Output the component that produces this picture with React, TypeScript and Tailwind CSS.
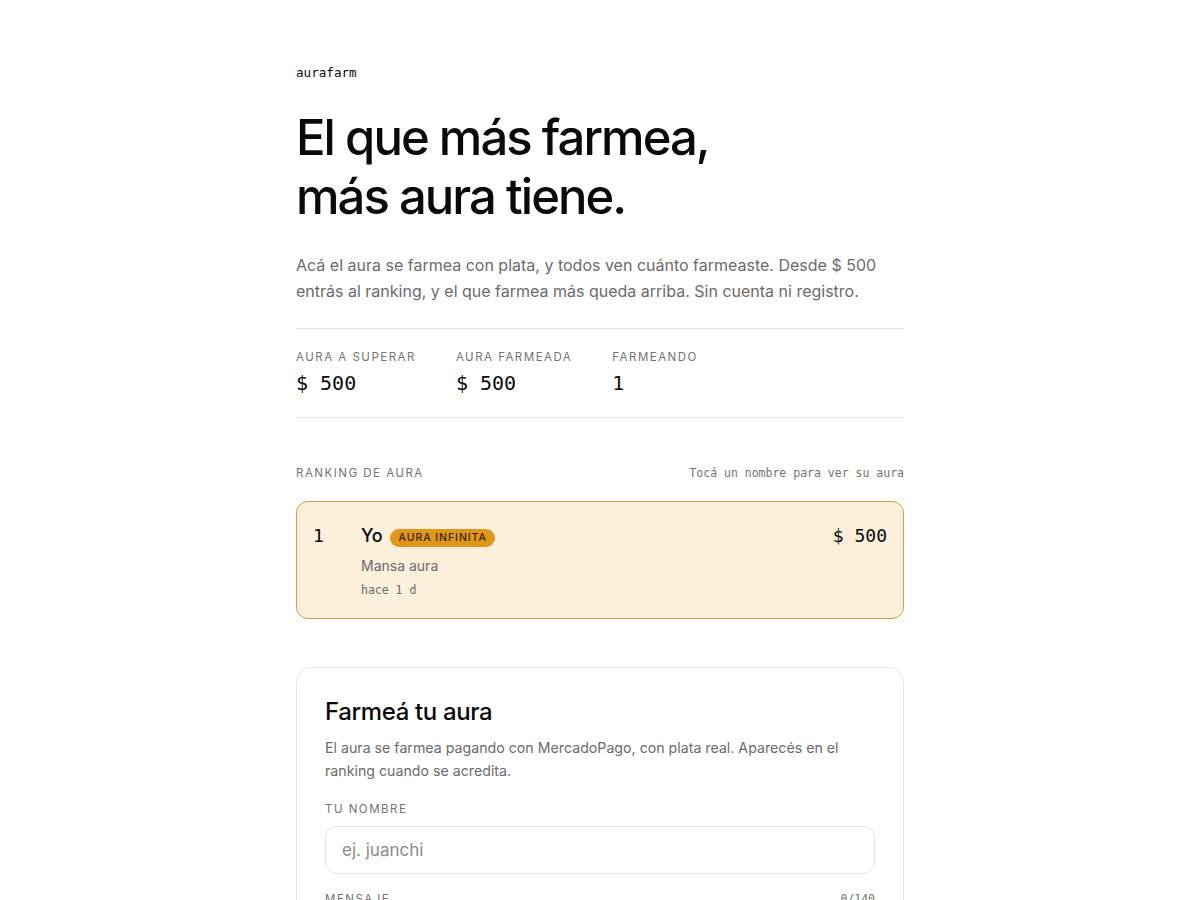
const mono = "font-['DejaVu_Sans_Mono',monospace]"

export default function App() {
  return (
    <div className="min-h-screen bg-white text-[#0a0a0a] font-['Inter',sans-serif]">
      <main className="max-w-[608px] mx-auto pt-[64px] pb-16">
        <div className={`${mono} text-[12.6px] leading-[18px]`}>aurafarm</div>

        <h1 className="mt-[26px] text-[49px] leading-[59px] tracking-[-0.04em] font-medium">
          El que más farmea,<br />más aura tiene.
        </h1>

        <p className="mt-[26px] text-[16px] leading-[26px] text-[#6b6b6b]">
          Acá el aura se farmea con plata, y todos ven cuánto farmeaste. Desde $ 500 entrás al ranking, y el que farmea más queda arriba. Sin cuenta ni registro.
        </p>

        {/* Stats */}
        <div className="mt-[24px] border-y border-[#e5e5e5] pt-[19px] pb-[20px] flex gap-[40px]">
          {[
            { label: 'Aura a superar', value: '$ 500' },
            { label: 'Aura farmeada', value: '$ 500' },
            { label: 'Farmeando', value: '1' },
          ].map(({ label, value }) => (
            <div key={label}>
              <div className="text-[11.5px] leading-[18px] uppercase tracking-[0.13em] text-[#737373]">{label}</div>
              <div className={`mt-[3px] ${mono} text-[20px] leading-[28px]`}>{value}</div>
            </div>
          ))}
        </div>

        {/* Ranking */}
        <div className="mt-[46px] flex items-center justify-between">
          <span className="text-[11.5px] leading-[18px] uppercase tracking-[0.13em] text-[#737373]">Ranking de aura</span>
          <span className={`${mono} text-[11.5px] leading-[18px] text-[#737373]`}>Tocá un nombre para ver su aura</span>
        </div>

        <div className="mt-[19px] rounded-xl border border-[#d99a3c] bg-[#fcefdc] px-[16px] pt-[21px] pb-[19px] flex items-start">
          <div className={`w-[48px] ${mono} text-[18px] leading-[26px]`}>1</div>
          <div className="flex-1">
            <div className="flex items-center gap-[8px]">
              <span className="text-[18px] leading-[26px] font-medium tracking-[-0.01em]">Yo</span>
              <span className="mt-[3px] rounded-full bg-[#e0951b] px-[8px] py-[2px] text-[10.5px] leading-[14px] uppercase tracking-[0.09em] text-[#3a2503] font-medium">Aura infinita</span>
            </div>
            <div className="mt-[7px] text-[14px] leading-[20px] text-[#6b6b6b]">Mansa aura</div>
            <div className={`mt-[5px] ${mono} text-[11.5px] leading-[18px] text-[#6b6b6b]`}>hace 1 d</div>
          </div>
          <div className={`${mono} text-[18px] leading-[26px]`}>$ 500</div>
        </div>

        {/* Form */}
        <div className="mt-[48px] rounded-2xl border border-[#e5e5e5] px-[28px] pt-[28px] pb-[28px]">
          <h2 className="text-[24px] leading-[32px] font-medium tracking-[-0.015em]">Farmeá tu aura</h2>
          <p className="mt-[8px] text-[14.2px] leading-[23px] text-[#6b6b6b]">
            El aura se farmea pagando con MercadoPago, con plata real. Aparecés en el ranking cuando se acredita.
          </p>

          <label className="block mt-[18px] text-[11.5px] leading-[18px] uppercase tracking-[0.13em] text-[#737373]">Tu nombre</label>
          <input
            placeholder="ej. juanchi"
            className="mt-[8px] w-full h-[48px] rounded-xl border border-[#e5e5e5] px-[16px] text-[17px] placeholder:text-[#8a8a8a] outline-none"
          />

          <div className="mt-[16px] flex items-center justify-between">
            <span className="text-[11.5px] leading-[18px] uppercase tracking-[0.13em] text-[#737373]">Mensaje</span>
            <span className={`${mono} text-[11.5px] leading-[18px] text-[#737373]`}>0/140</span>
          </div>
          <textarea className="mt-[8px] w-full h-[96px] rounded-xl border border-[#e5e5e5] px-[16px] py-[12px] text-[16px] outline-none resize-none" />
        </div>
      </main>
    </div>
  )
}
